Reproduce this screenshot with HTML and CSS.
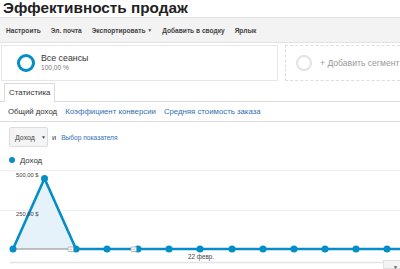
FILE: index.html
```html
<!DOCTYPE html>
<html>
<head>
<meta charset="utf-8">
<link rel="stylesheet" href="styles.css">
</head>
<body>
<h1 class="title">Эффективность продаж</h1>
<div class="toolbar">
  <span>Настроить</span>
  <span>Эл. почта</span>
  <span>Экспортировать <i class="caret">▼</i></span>
  <span>Добавить в сводку</span>
  <span>Ярлык</span>
</div>
<div class="segments">
  <div class="seg seg-active">
    <span class="ring"></span>
    <div class="seg-text">
      <div class="seg-name">Все сеансы</div>
      <div class="seg-pct">100,00 %</div>
    </div>
  </div>
  <div class="seg seg-add">
    <span class="ring ring-gray"></span>
    <span class="add-text">+ Добавить сегмент</span>
  </div>
</div>
<div class="tabs">
  <div class="tab">Статистика</div>
</div>
<div class="metrics">
  <span class="metric current">Общий доход</span>
  <span class="metric">Коэффициент конверсии</span>
  <span class="metric">Средняя стоимость заказа</span>
</div>
<div class="controls">
  <div class="dropdown">Доход <i class="caret">▼</i></div>
  <span class="and">и</span>
  <span class="pick">Выбор показателя</span>
</div>
<div class="legend"><span class="dot"></span>Доход</div>
<div class="chart">
  <svg width="400" height="100" viewBox="0 165 400 100">
    <line x1="0" y1="169.5" x2="400" y2="169.5" stroke="#eeeeee" stroke-width="1"/>
    <line x1="0" y1="209.5" x2="400" y2="209.5" stroke="#eeeeee" stroke-width="1"/>
    <line x1="10" y1="261.5" x2="400" y2="261.5" stroke="#e4e4e4" stroke-width="1.5"/>
    <polygon points="13,248 44.5,177.5 76,248" fill="#e6f2fa"/>
    <line x1="13" y1="248" x2="76" y2="248" stroke="#888888" stroke-width="1.2"/>
    <polyline points="13,248 44.5,177.5 76,248 107,248 138,248 169,248 200,248 232,248 263,248 294,248 325,248 356,248 387,248 400,248" fill="none" stroke="#058dc7" stroke-width="2.6" stroke-linejoin="round"/>
    <g fill="#058dc7">
      <circle cx="13" cy="248" r="3.5"/>
      <circle cx="44.5" cy="177.5" r="3.5"/>
      <circle cx="76" cy="248" r="3.5"/>
      <circle cx="107" cy="248" r="3.5"/>
      <circle cx="138" cy="248" r="3.5"/>
      <circle cx="169" cy="248" r="3.5"/>
      <circle cx="200" cy="248" r="3.5"/>
      <circle cx="232" cy="248" r="3.5"/>
      <circle cx="263" cy="248" r="3.5"/>
      <circle cx="294" cy="248" r="3.5"/>
      <circle cx="325" cy="248" r="3.5"/>
      <circle cx="356" cy="248" r="3.5"/>
      <circle cx="387" cy="248" r="3.5"/>
    </g>
    <g fill="#ffffff" stroke="#9aa4ad" stroke-width="0.8">
      <rect x="68" y="246" width="5.5" height="4.5" rx="0.8"/>
      <rect x="131" y="246" width="5.5" height="4.5" rx="0.8"/>
    </g>
    <g fill="#9aa4ad">
      <rect x="69.5" y="247.8" width="2.5" height="0.8"/>
      <rect x="132.5" y="247.8" width="2.5" height="0.8"/>
    </g>
    <text x="16" y="176" class="axis">500,00 $</text>
    <text x="16" y="215" class="axis">250,00 $</text>
    <text x="188" y="258" class="axis axis-x">22 февр.</text>
  </svg>
  <div class="corner"><i class="caret">▼</i></div>
</div>
</body>
</html>
```
FILE: styles.css
```css
html, body {
  margin: 0;
  padding: 0;
  background: #ffffff;
  width: 400px;
  height: 269px;
  overflow: hidden;
  font-family: "Liberation Sans", Arial, sans-serif;
  color: #333333;
}
.title {
  margin: 0;
  font-size: 15.3px;
  line-height: 16px;
  font-weight: bold;
  color: #222222;
  padding-left: 3px;
  height: 17px;
}
.toolbar {
  height: 24px;
  background: #f3f3f3;
  border-top: 1px solid #e2e2e2;
  border-bottom: 1px solid #e2e2e2;
  display: flex;
  align-items: center;
  gap: 10px;
  padding-left: 6px;
  font-size: 6.6px;
  font-weight: bold;
  color: #444444;
}
.caret {
  font-style: normal;
  font-size: 5px;
  vertical-align: 1px;
  color: #555555;
}
.segments {
  display: flex;
  gap: 7px;
  padding: 2px 0 0 1px;
  height: 37px;
}
.seg {
  display: flex;
  align-items: center;
  box-sizing: border-box;
  height: 36px;
}
.seg-active {
  width: 277px;
  border: 1px solid #e6e6e6;
  padding-left: 15px;
  gap: 6px;
}
.seg-add {
  flex: 1;
  border: 1px dashed #dddddd;
  border-right: none;
  padding-left: 10px;
  gap: 8px;
  white-space: nowrap;
}
.ring {
  width: 12px;
  height: 12px;
  border: 3px solid #058dc7;
  border-radius: 50%;
  flex: none;
}
.ring-gray {
  width: 12px;
  height: 12px;
  border: 2px solid #e3e3e3;
}
.seg-text {
  display: flex;
  flex-direction: column;
  margin-top: -2px;
}
.seg-name {
  font-size: 8.8px;
  line-height: 11px;
  color: #333333;
}
.seg-pct {
  font-size: 6.6px;
  line-height: 8px;
  color: #777777;
}
.add-text {
  font-size: 8.6px;
  color: #999999;
}
.tabs {
  display: flex;
  padding-left: 4px;
  padding-top: 1px;
  border-bottom: 1px solid #dcdcdc;
  height: 18px;
}
.tab {
  border: 1px solid #dcdcdc;
  border-bottom: none;
  background: #ffffff;
  padding: 0 4px;
  font-size: 7.9px;
  line-height: 18px;
  color: #333333;
  margin-bottom: -1px;
  height: 19px;
  box-sizing: border-box;
}
.metrics {
  display: flex;
  gap: 8px;
  padding-left: 8px;
  height: 19px;
  align-items: center;
  border-bottom: 1px solid #dddddd;
  font-size: 7.8px;
}
.metric {
  color: #2f6fb3;
}
.metric.current {
  color: #333333;
}
.controls {
  display: flex;
  align-items: center;
  padding: 5px 0 0 9px;
  height: 20px;
}
.dropdown {
  width: 39px;
  height: 20px;
  box-sizing: border-box;
  background: #f4f4f4;
  border: 1px solid #dcdcdc;
  border-radius: 2px;
  font-size: 7px;
  color: #444444;
  display: flex;
  align-items: center;
  gap: 6px;
  padding-left: 5px;
}
.and {
  font-size: 7.5px;
  color: #444444;
  margin-left: 4px;
}
.pick {
  font-size: 6.6px;
  color: #2f6fb3;
  margin-left: 5px;
}
.legend {
  display: flex;
  align-items: center;
  gap: 5px;
  padding-left: 9px;
  font-size: 7.8px;
  color: #333333;
  height: 14px;
  margin-top: 6px;
}
.dot {
  width: 6px;
  height: 6px;
  border-radius: 50%;
  background: #058dc7;
}
.chart {
  position: relative;
  height: 100px;
}
.chart svg {
  display: block;
  position: absolute;
  left: 0;
  top: -1px;
}
.axis {
  font-family: "Liberation Sans", Arial, sans-serif;
  font-size: 5.8px;
  fill: #444444;
}
.axis-x {
  font-size: 6.3px;
}
.corner {
  position: absolute;
  right: 0;
  top: 93px;
  width: 17px;
  height: 9px;
  background: #f3f3f3;
  border: 1px solid #e0e0e0;
  border-right: none;
  box-sizing: border-box;
  text-align: right;
  padding-right: 2px;
  line-height: 7px;
}
```
